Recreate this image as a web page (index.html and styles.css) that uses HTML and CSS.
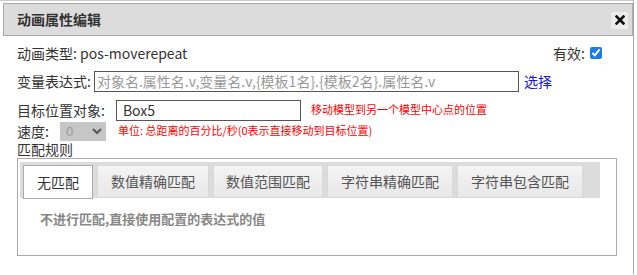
FILE: index.html
```html
<!DOCTYPE html>
<html lang="zh-CN">
<head>
    <meta charset="UTF-8">
    <title>动画属性编辑</title>
    <link rel="stylesheet" href="styles.css">
</head>
<body>
    <div class="dialog">
        <!-- Title bar -->
        <div class="dialog-header">
            <span class="dialog-title">动画属性编辑</span>
            <button class="close-button">
                <svg width="10" height="10" viewBox="0 0 10 10"><path d="M1.5 1.5 L8.5 8.5 M8.5 1.5 L1.5 8.5" stroke="#111" stroke-width="2.6" stroke-linecap="square"/></svg>
            </button>
        </div>

        <div class="dialog-body">
            <div class="row row-type">
                <span>动画类型: pos-moverepeat</span>
                <label class="valid">有效: <input type="checkbox" checked></label>
            </div>

            <div class="row row-expr">
                <span class="label">变量表达式:</span>
                <input type="text" class="expr-input" placeholder="对象名.属性名.v,变量名.v,{模板1名}.{模板2名}.属性名.v">
                <a class="pick-link" href="#">选择</a>
            </div>

            <div class="row row-target">
                <span class="label">目标位置对象:</span>
                <input type="text" class="target-input" value="Box5">
                <span class="hint">移动模型到另一个模型中心点的位置</span>
            </div>

            <div class="row row-speed">
                <span class="label">速度:</span>
                <div class="speed-select">
                    <span class="speed-value">0</span>
                    <svg width="10" height="7" viewBox="0 0 10 7"><path d="M1 1 L5 5 L9 1" stroke="#555" stroke-width="2" fill="none"/></svg>
                </div>
                <span class="hint">单位: 总距离的百分比/秒(0表示直接移动到目标位置)</span>
            </div>

            <div class="row-match">匹配规则</div>

            <div class="match-box">
                <div class="tab-bar">
                    <div class="tab active">无匹配</div>
                    <div class="tab tab-w1">数值精确匹配</div>
                    <div class="tab tab-w2">数值范围匹配</div>
                    <div class="tab tab-w3">字符串精确匹配</div>
                    <div class="tab tab-w3">字符串包含匹配</div>
                </div>
                <div class="tab-content">不进行匹配,直接使用配置的表达式的值</div>
            </div>
        </div>
    </div>
</body>
</html>
```

FILE: styles.css
```css
body {
    margin: 0;
    font-family: "Noto Sans CJK SC", "Liberation Sans", sans-serif;
    font-size: 14px;
    line-height: 1.2;
    color: #333;
    background: #fff;
}

/* Dialog frame */
.dialog {
    width: 634px;
    height: 274px;
    border-top: 1px solid #c8c8c8;
    border-right: 1px solid #a8a8a8;
    padding: 2px 0 0 3px;
    box-sizing: border-box;
}

.dialog-header {
    height: 33px;
    background-color: #dcdcdc;
    border: 1px solid #aaa;
    box-sizing: border-box;
    display: flex;
    align-items: center;
    justify-content: space-between;
    padding: 0 4px 0 13px;
}

.dialog-title {
    font-weight: bold;
    font-size: 14px;
    color: #333;
}

.close-button {
    width: 17px;
    height: 17px;
    border: none;
    border-radius: 2px;
    background-color: #ececec;
    padding: 0;
    display: flex;
    align-items: center;
    justify-content: center;
    margin-top: 1px;
}

/* Body rows */
.dialog-body {
    padding: 0 0 0 14px;
}

.row {
    display: flex;
    align-items: center;
}

.row-type {
    height: 22px;
    margin-top: 6px;
    justify-content: space-between;
    padding-right: 31px;
}

.valid {
    display: flex;
    align-items: center;
}

.valid input {
    margin: 0 0 0 5px;
    width: 12px;
    height: 12px;
    accent-color: #1a7ee6;
}

.row-expr {
    height: 22px;
    margin-top: 6px;
}

.expr-input {
    width: 425px;
    height: 21px;
    box-sizing: border-box;
    border: 1px solid #555;
    margin-left: 3px;
    padding: 0 2px;
    font-family: inherit;
    font-size: 14px;
}

.expr-input::placeholder {
    color: #999;
}

.pick-link {
    color: #1515e0;
    text-decoration: none;
    margin-left: 5px;
}

.row-target {
    height: 22px;
    margin-top: 7px;
}

.target-input {
    width: 185px;
    height: 21px;
    box-sizing: border-box;
    border: 1px solid #555;
    margin-left: 11px;
    padding: 0 6px;
    font-family: inherit;
    font-size: 14px;
    color: #333;
}

.hint {
    color: #f00;
    font-size: 11px;
    margin-left: 10px;
}

.row-speed {
    height: 20px;
}

.speed-select {
    width: 46px;
    height: 19px;
    background-color: #c6c6c6;
    margin-left: 11px;
    display: flex;
    align-items: center;
    justify-content: space-between;
    padding: 0 4px 0 6px;
    box-sizing: border-box;
    color: #999;
}

.speed-value {
    font-family: "Liberation Sans", sans-serif;
    font-size: 13px;
    line-height: 1;
}

.row-speed .hint {
    margin-left: 12px;
}

.row-match {
    height: 16px;
    line-height: 16px;
}

/* Match rule box */
.match-box {
    margin-top: 1px;
    width: 600px;
    height: 98px;
    box-sizing: border-box;
    border: 1px solid #aaa;
    padding: 3px 0 0 2px;
}

.tab-bar {
    width: 580px;
    height: 36px;
    background-color: #dcdcdc;
    display: flex;
    gap: 4px;
    padding: 3px 0 0 3px;
    box-sizing: border-box;
}

.tab {
    width: 70px;
    height: 33px;
    box-sizing: border-box;
    border: 1px solid #d8d8d8;
    background: linear-gradient(#f4f4f4, #e8e8e8);
    color: #555;
    display: flex;
    align-items: center;
    justify-content: center;
}

.tab.active {
    background: #fff;
    border-color: #aaa;
    color: #333;
    height: 34px;
}

.tab-w1 { width: 112px; }
.tab-w2 { width: 110px; }
.tab-w3 { width: 126px; }

.tab-content {
    padding: 13px 0 0 20px;
    font-weight: bold;
    color: #888;
    font-size: 13px;
}
```
